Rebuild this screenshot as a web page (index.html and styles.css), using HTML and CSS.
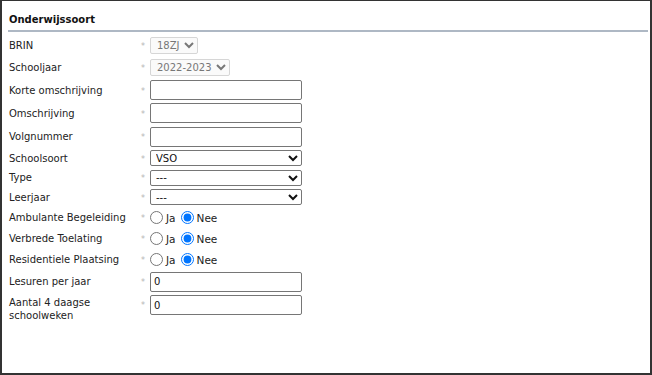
FILE: index.html
```html
<!DOCTYPE html>
<html lang="nl">
<head>
    <meta charset="UTF-8">
    <title>Onderwijssoort</title>
    <link rel="stylesheet" href="styles.css">
</head>
<body>
    <div class="frame">
        <div class="panel-head">
            <h2>Onderwijssoort</h2>
        </div>

        <div class="form">
            <div class="row h21">
                <label>BRIN</label>
                <span class="req">*</span>
                <select class="sel-small brin" disabled><option>18ZJ</option></select>
            </div>
            <div class="row h23">
                <label>Schooljaar</label>
                <span class="req">*</span>
                <select class="sel-small jaar" disabled><option>2022-2023</option></select>
            </div>
            <div class="row h22">
                <label>Korte omschrijving</label>
                <span class="req">*</span>
                <input type="text" class="txt">
            </div>
            <div class="row h24">
                <label>Omschrijving</label>
                <span class="req">*</span>
                <input type="text" class="txt">
            </div>
            <div class="row h23">
                <label>Volgnummer</label>
                <span class="req">*</span>
                <input type="text" class="txt">
            </div>
            <div class="row h20">
                <label>Schoolsoort</label>
                <span class="req">*</span>
                <select class="sel"><option>VSO</option></select>
            </div>
            <div class="row h19">
                <label>Type</label>
                <span class="req">*</span>
                <select class="sel"><option>---</option></select>
            </div>
            <div class="row h20">
                <label>Leerjaar</label>
                <span class="req">*</span>
                <select class="sel"><option>---</option></select>
            </div>
            <div class="row h21">
                <label>Ambulante Begeleiding</label>
                <span class="req">*</span>
                <div class="radios">
                    <input type="radio" name="amb" id="amb-ja"><label for="amb-ja">Ja</label>
                    <input type="radio" name="amb" id="amb-nee" checked><label for="amb-nee">Nee</label>
                </div>
            </div>
            <div class="row h21">
                <label>Verbrede Toelating</label>
                <span class="req">*</span>
                <div class="radios">
                    <input type="radio" name="ver" id="ver-ja"><label for="ver-ja">Ja</label>
                    <input type="radio" name="ver" id="ver-nee" checked><label for="ver-nee">Nee</label>
                </div>
            </div>
            <div class="row h21">
                <label>Residentiele Plaatsing</label>
                <span class="req">*</span>
                <div class="radios">
                    <input type="radio" name="res" id="res-ja"><label for="res-ja">Ja</label>
                    <input type="radio" name="res" id="res-nee" checked><label for="res-nee">Nee</label>
                </div>
            </div>
            <div class="row h23">
                <label>Lesuren per jaar</label>
                <span class="req">*</span>
                <input type="text" class="txt" value="0">
            </div>
            <div class="row top">
                <label>Aantal 4 daagse schoolweken</label>
                <span class="req">*</span>
                <input type="text" class="txt" value="0">
            </div>
        </div>
    </div>
</body>
</html>
```

FILE: styles.css
```css
* {
    margin: 0;
    padding: 0;
    box-sizing: border-box;
}

body {
    font-family: "DejaVu Sans", Verdana, sans-serif;
    font-size: 10px;
    color: #222;
    background: #fff;
}

.frame {
    width: 652px;
    height: 375px;
    border-top: 1px solid #333;
    border-left: 2px solid #333;
    border-right: 2px solid #333;
    border-bottom: 2px solid #333;
    background: #fff;
}

.panel-head {
    margin: 0 2px 0 6px;
    height: 31px;
    padding: 12px 0 0 1px;
    border-bottom: 2px solid #aeb8c4;
}

.panel-head h2 {
    font-size: 10px;
    font-weight: bold;
    color: #111;
    line-height: 14px;
}

.form {
    padding: 3px 0 0 7px;
}

.row {
    display: flex;
    align-items: center;
}

.row > label {
    width: 131px;
    line-height: 13px;
}

.row.top {
    align-items: flex-start;
    padding-top: 2px;
}

.row.top > label {
    padding-top: 1px;
}

.h19 { height: 19px; }
.h20 { height: 20px; }
.h21 { height: 21px; }
.h22 { height: 22px; }
.h23 { height: 23px; }
.h24 { height: 24px; }

.req {
    width: 10px;
    color: #b5b5b5;
    font-size: 8px;
    line-height: 8px;
    padding: 3px 0 0 1px;
}

.row.top .req {
    padding-top: 7px;
}

.txt {
    width: 152px;
    height: 20px;
    border: 1px solid #767676;
    border-radius: 2px;
    font-family: "DejaVu Sans", Verdana, sans-serif;
    font-size: 10px;
    padding: 0 3px;
    color: #111;
    background: #fff;
}

.sel {
    width: 152px;
    height: 16px;
    border: 1px solid #767676;
    border-radius: 2px;
    font-family: "DejaVu Sans", Verdana, sans-serif;
    font-size: 10px;
    color: #111;
    background: #fff;
    padding-left: 1px;
}

.sel-small {
    height: 17px;
    border: 1px solid #d6d6d6;
    border-radius: 2px;
    font-family: "DejaVu Sans", Verdana, sans-serif;
    font-size: 10px;
    color: #777;
    background: #fafafa;
    padding-left: 2px;
    opacity: 1;
}

.brin { width: 48px; }
.jaar { width: 80px; }

.radios {
    display: flex;
    align-items: center;
}

.radios input {
    flex: none;
    width: 13px;
    height: 13px;
    margin: 0 3px 0 0;
}

.radios label {
    margin-right: 5px;
    font-size: 10.5px;
}
```
